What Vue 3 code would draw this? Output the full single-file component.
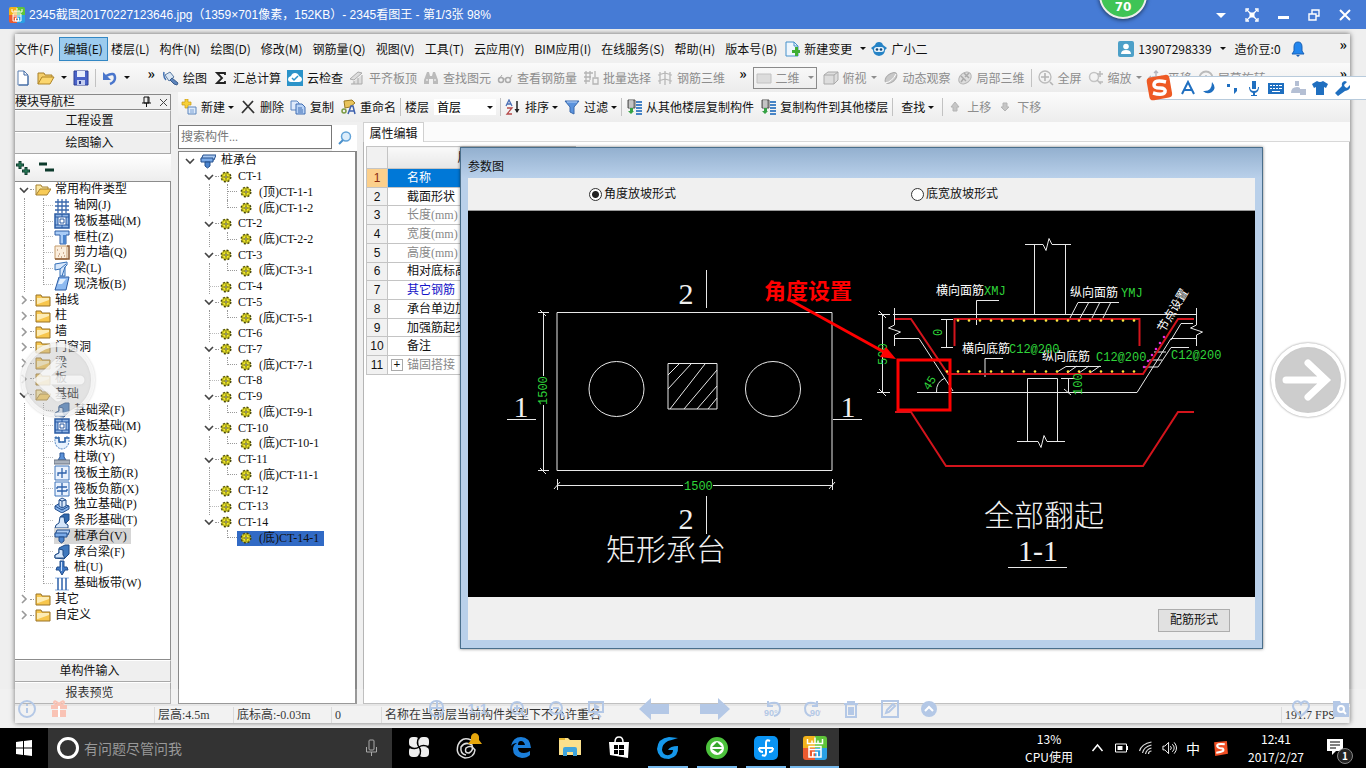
<template>
  <div class="page">
    <svg class="sprite" aria-hidden="true">
      <symbol id="i-app" viewBox="0 0 16 16"><path d="M0 2q0-2 2-2h6v8H0z" fill="#f2b21c" /><path d="M8 0h6q2 0 2 2v6H8z" fill="#5fc43a" /><path d="M0 8h8v8H2q-2 0-2-2z" fill="#ea5a30" /><path d="M8 8h8v6q0 2-2 2H8z" fill="#2aa0e4" /><path d="M3 2v3h10V2M6 3v2M8 1v4M10 3v2M4 7h8v7H4zM4 9h8M6.500 11h3v3h-3z" fill="none" stroke="#fff" stroke-width="1" /></symbol>
      <symbol id="i-new" viewBox="0 0 16 16"><path d="M3 1h6l4 4v10H3z" fill="#fff" stroke="#5a7eb0" /><path d="M9 1v4h4M13 6v9H4" fill="none" stroke="#3d66a3" /></symbol>
      <symbol id="i-open" viewBox="0 0 18 16"><path d="M1 14V3h6l1 2h7v3" fill="#f5cf6c" stroke="#a8802b" /><path d="M1 14l4-7h12l-4 7z" fill="#fbd66e" stroke="#b08526" /></symbol>
      <symbol id="i-save" viewBox="0 0 16 16"><path d="M1 1h14v14H1z" fill="#4a63c8" stroke="#2d3f94" /><path d="M4 1h8v6H4z" fill="#e8eefc" /><path d="M4 10h8v5H4z" fill="#c3cdf0" /><path d="M6 11h2v3H6z" fill="#2d3f94" /></symbol>
      <symbol id="i-undo" viewBox="0 0 16 16"><path d="M4 6q9-5 9 2 0 4-5 6" fill="none" stroke="#4a76cc" stroke-width="2.500" /><path d="M1 2v8h8z" fill="#4a76cc" /></symbol>
      <symbol id="i-paint" viewBox="0 0 16 16"><path d="M2 5l5-3 4 5-5 4z" fill="#d9e6f4" stroke="#5b7ba2" /><path d="M9 8l6 5-1 2-3-1-4-4z" fill="#5c84bc" stroke="#3c5d8c" /><path d="M1 2q-1 5 2 8" fill="none" stroke="#4272b4" stroke-width="1.500" /></symbol>
      <symbol id="i-sum" viewBox="0 0 16 16"><path d="M12 5V3H4l5 5-5 5h8v-2" fill="none" stroke="#222" stroke-width="1.800" /></symbol>
      <symbol id="i-cloud" viewBox="0 0 16 16"><path d="M0 0h16v16H0z" fill="#2b93c9" /><path d="M4 12q-3 0-3-3 0-2 3-3 1-3 4-3t4 3q3 1 3 3 0 3-3 3z" fill="#fff" /><path d="M5 8l2 2 4-4" fill="none" stroke="#2b93c9" stroke-width="1.500" /></symbol>
      <symbol id="i-align" viewBox="0 0 16 16"><path d="M1 9l8-7 4 1-8 7zM2 14h11V5M5 14v-3M9 14V8" fill="#ddd" stroke="#aaa" /></symbol>
      <symbol id="i-find" viewBox="0 0 16 16"><path d="M4 2h2l1 4h2l1-4h2l3 8v4h-5v-5H6v5H1v-4z" fill="#bbb" /><path d="M3 10h2M11 10h2" stroke="#fff" /></symbol>
      <symbol id="i-glass" viewBox="0 0 16 16"><circle cx="4" cy="10" r="2.500" fill="none" stroke="#aaa" stroke-width="1.500" /><circle cx="11" cy="10" r="2.500" fill="none" stroke="#aaa" stroke-width="1.500" /><path d="M6 9h3M2 9l3-4M13 9l2-4" stroke="#aaa" fill="none" /></symbol>
      <symbol id="i-batch" viewBox="0 0 16 16"><path d="M1 3h9M1 7h7M1 11h6M3 1v13M7 1v9M10 8h5v6h-5zM12 1v6" fill="none" stroke="#b4b4b4" stroke-width="1.300" /></symbol>
      <symbol id="i-steel" viewBox="0 0 16 16"><path d="M3 2v12M8 1v14M13 2v12M1 5l7-2 7 2M1 11l7-2 7 2" fill="none" stroke="#b4b4b4" stroke-width="1.200" /></symbol>
      <symbol id="i-flat" viewBox="0 0 16 16"><path d="M1 4h14v9H1z" fill="#dcdcdc" stroke="#c2c2c2" /></symbol>
      <symbol id="i-cube" viewBox="0 0 16 16"><path d="M1 5l4-3h10v8l-4 4H1z" fill="#ddd" stroke="#aaa" /><path d="M1 5h10v9M11 5l4-3" fill="none" stroke="#aaa" /></symbol>
      <symbol id="i-orbit" viewBox="0 0 16 16"><ellipse cx="8" cy="8" rx="7" ry="4" transform="rotate(-40 8 8)" fill="#c8c8c8" stroke="#aaa" /><path d="M2 13Q9 12 13 4" stroke="#fff" fill="none" /></symbol>
      <symbol id="i-part" viewBox="0 0 16 16"><ellipse cx="8" cy="8" rx="7" ry="5" transform="rotate(-40 8 8)" fill="#ddd" stroke="#b4b4b4" /><path d="M4 6l5 5M7 3l5 5M4 12l3-4M8 7l4-4" fill="none" stroke="#aaa" stroke-width="1.500" /></symbol>
      <symbol id="i-full" viewBox="0 0 16 16"><circle cx="7" cy="7" r="6" fill="none" stroke="#bbb" stroke-width="1.300" /><path d="M7 3v8M3 7h8M12 12l3 3" stroke="#b4b4b4" stroke-width="1.600" /></symbol>
      <symbol id="i-zoom" viewBox="0 0 16 16"><circle cx="6" cy="7" r="4.500" fill="none" stroke="#c4c4c4" stroke-width="1.500" /><path d="M9 10l4 4M12 1v6M9 4h6M11 12h4" stroke="#bbb" stroke-width="1.500" /></symbol>
      <symbol id="i-pan" viewBox="0 0 16 16"><path d="M8 1v14M1 8h14M6 3l2-2 2 2M6 13l2 2 2-2M3 6L1 8l2 2M13 6l2 2-2 2" fill="none" stroke="#b4b4bc" stroke-width="1.400" /></symbol>
      <symbol id="i-rot" viewBox="0 0 16 16"><circle cx="8" cy="8" r="6.500" fill="none" stroke="#bbb" stroke-width="2" /><path d="M5 8h6M8 5v6" stroke="#bbb" stroke-width="1.500" /></symbol>
      <symbol id="i-add" viewBox="0 0 16 16"><path d="M4 0h3v3h3v3H7v3H4V6H1V3h3z" fill="#f7d038" stroke="#c49a15" stroke-width=".7" /><path d="M7 8h8v7H7z" fill="#dce9fa" stroke="#5d86bd" /><path d="M9 11h4M9 13h4" stroke="#7fa3d4" /></symbol>
      <symbol id="i-del" viewBox="0 0 16 16"><path d="M3 2l11 12M13 2L2 14" stroke="#333" stroke-width="1.800" /></symbol>
      <symbol id="i-copy" viewBox="0 0 16 16"><path d="M1 2h6l2 2v7H1z" fill="#dfeafb" stroke="#5b84c1" /><path d="M6 5h6l3 3v7H6z" fill="#b8d2f5" stroke="#3f6cb2" /><path d="M8 9h4M8 11h5M8 13h5" stroke="#3f6cb2" /></symbol>
      <symbol id="i-rename" viewBox="0 0 16 16"><path d="M4 2l8-1 3 3-5 4-5 1z" fill="#e8c35a" stroke="#9b7b25" /><path d="M8 15l3-8h2l2 8M9 12h5" fill="none" stroke="#3f62ae" stroke-width="1.500" /><circle cx="4" cy="12" r="2" fill="none" stroke="#7a9a42" stroke-width="1.500" /></symbol>
      <symbol id="i-sort" viewBox="0 0 16 16"><path d="M1 7l3-6 3 6M2 5h4" fill="none" stroke="#4a6fb5" stroke-width="1.300" /><path d="M2 9h5l-5 6h5" fill="none" stroke="#b54a4a" stroke-width="1.300" /><path d="M12 2v11" stroke="#222" stroke-width="1.500" /><path d="M9.500 10h5L12 14z" fill="#222" /></symbol>
      <symbol id="i-filter" viewBox="0 0 16 16"><path d="M1 2h14L10 8v7l-4-2V8z" fill="#5b93dd" stroke="#3a69ac" /><path d="M3 3h10" stroke="#b7d3f7" /></symbol>
      <symbol id="i-floor" viewBox="0 0 16 16"><path d="M2 1h7v8H2z" fill="#9a9a9a" stroke="#555" /><path d="M4 1v8M6 1v8" stroke="#eee" /><path d="M10 3h6M10 6h6M10 9h6M10 12h6M10 15h6" stroke="#4784c6" stroke-width="2" /><path d="M4 9v3H2l3 3 3-3H7V9z" fill="#35a244" /></symbol>
      <symbol id="i-up" viewBox="0 0 16 16"><path d="M8 3l4 5H10v4H6V8H4z" fill="#c6c6c6" stroke="#b4b4b4" /></symbol>
      <symbol id="i-down" viewBox="0 0 16 16"><path d="M8 12l4-4H10V4H6v4H4z" fill="#c6c6c6" stroke="#b4b4b4" /></symbol>
      <symbol id="i-newchg" viewBox="0 0 16 16"><path d="M2 1h8l4 4v10H2z" fill="#eef6fd" stroke="#4691cb" /><path d="M10 1v4h4" fill="none" stroke="#4691cb" /><path d="M8 9h3V6h3v3h2v3h-2v3h-3v-3H8z" fill="#3fae33" /></symbol>
      <symbol id="i-bot" viewBox="0 0 16 16"><path d="M5 2q3-2 6 0l1 2 4 3-2 2q0 5-6 6-6-1-6-6L0 7l4-3z" fill="#2583c6" /><rect x="3" y="6" width="10" height="5" rx="2.500" fill="#e4f2fc" /><circle cx="6" cy="8.500" r="1.300" fill="#164a7a" /><circle cx="10" cy="8.500" r="1.300" fill="#164a7a" /></symbol>
      <symbol id="i-user" viewBox="0 0 16 16"><rect width="16" height="16" rx="2" fill="#4da0c8" /><circle cx="8" cy="5.500" r="2.800" fill="#fff" /><path d="M3 13q0-4 5-4t5 4z" fill="#fff" /></symbol>
      <symbol id="i-bell" viewBox="0 0 16 16"><path d="M8 1q4 0 4 5v4l2 3H2l2-3V6q0-5 4-5z" fill="#2286ee" stroke="#1a61b4" /><path d="M6 14h4l-2 2z" fill="#1a61b4" /></symbol>
      <!-- tree icons -->
      <symbol id="t-fopen" viewBox="0 0 16 16"><path d="M1 13V3h5l1 2h6v3" fill="#fbe7a2" stroke="#a68131" /><path d="M1 13l4-6h11l-4 6z" fill="#f8cb57" stroke="#a68131" /></symbol>
      <symbol id="t-folder" viewBox="0 0 16 16"><path d="M1 3h5l1 2h8v9H1z" fill="#f7c64d" stroke="#997326" /><path d="M2 6h12v2L3 12H2z" fill="#fdecb4" /></symbol>
      <symbol id="t-grid" viewBox="0 0 16 16"><path d="M4 1v14M8 1v14M12 1v14M1 4h14M1 8h14M1 12h14" stroke="#3b68ac" stroke-width="1.300" /></symbol>
      <symbol id="t-raft" viewBox="0 0 16 16"><path d="M1 1h14v14H1z" fill="#8fb4e4" stroke="#2b5ba3" stroke-width="1.500" /><path d="M4 4h8v8H4z" fill="#fff" stroke="#2b5ba3" /><path d="M6 6h4v4H6zM1 4h3M1 12h3M12 4h3M12 12h3M8 1v3M8 12v3" fill="none" stroke="#2b5ba3" /></symbol>
      <symbol id="t-col" viewBox="0 0 16 16"><path d="M1 2h14v4h-3v9H6V6H1z" fill="#a9ccf6" stroke="#2e5fa6" /><path d="M9 6v9h3V6z" fill="#4b84cd" /></symbol>
      <symbol id="t-wall" viewBox="0 0 16 16"><path d="M1 1h12v13H1z" fill="#fbeedd" stroke="#c59b6a" /><path d="M13 1h2v13H1" fill="none" stroke="#8a5a33" stroke-width="1.500" /><path d="M3 5h1M7 3h1M5 9h1M9 8h1M4 11h1M10 11h1M7 12h1" stroke="#a5704a" /></symbol>
      <symbol id="t-beam" viewBox="0 0 16 16"><path d="M1 3l12-2v3l-2 2v9H6V8l-5 1z" fill="#d7e7fb" stroke="#3570b8" /><path d="M6 8l6-5M8 15l3-9" stroke="#3570b8" /></symbol>
      <symbol id="t-slab" viewBox="0 0 16 16"><path d="M5 1h10l-3 13H1z" fill="#8ebaf0" stroke="#2b5ba3" /><path d="M6 3h6l-4 5H4z" fill="#e4f0fd" /></symbol>
      <symbol id="t-fbeam" viewBox="0 0 16 16"><path d="M1 14v-3l4-2V4l6-3h4v9l-5 5z" fill="#3e78bd" stroke="#1e4a85" /><path d="M1 14v-3l4-2V5l4 1v5l2 3z" fill="#d3e5fa" stroke="#1e4a85" /></symbol>
      <symbol id="t-pit" viewBox="0 0 16 16"><path d="M1 3h4v5h6V3h4q1 11-7 12Q0 14 1 3z" fill="#e8f2fd" stroke="#4a80c2" stroke-dasharray="2 1" /><path d="M1 4h4v4h6V4h4" fill="none" stroke="#2f64a8" stroke-width="1.500" /></symbol>
      <symbol id="t-pier" viewBox="0 0 16 16"><path d="M6 3h4v4l2 3H4l2-3z" fill="#5c92d8" stroke="#2a5797" /><path d="M0 10h16v4H0z" fill="#aab2bd" stroke="#6a7584" /></symbol>
      <symbol id="t-main" viewBox="0 0 16 16"><path d="M1 1h14v14H1z" fill="#eaf2fd" stroke="#3f74ba" /><path d="M8 3v10M4 11V8h8V5" fill="none" stroke="#2e62ab" stroke-width="1.300" /></symbol>
      <symbol id="t-neg" viewBox="0 0 16 16"><path d="M1 1h14v14H1z" fill="#eaf2fd" stroke="#3f74ba" /><path d="M8 2v12M3 6h10M3 10h10M3 6v2M13 10V8" fill="none" stroke="#2e62ab" stroke-width="1.300" /></symbol>
      <symbol id="t-iso" viewBox="0 0 16 16"><path d="M1 9l5-3 9 3v3l-7 4-7-4z" fill="#86b2ea" stroke="#234e8c" /><path d="M5 3l3-2 4 2v6l-4 2-3-2z" fill="#dbe9fb" stroke="#234e8c" /><path d="M8 4v7M1 9l7 4 7-4M5 3l3 1 4-1" fill="none" stroke="#234e8c" /></symbol>
      <symbol id="t-strip" viewBox="0 0 16 16"><path d="M6 4l4-3h5v6l-3 3z" fill="#2f67ac" stroke="#1e4a85" /><path d="M1 15l1-3 3-2 1-6h4l1 6 3 2v3z" fill="#d3e5fa" stroke="#1e4a85" /></symbol>
      <symbol id="t-cap" viewBox="0 0 16 16"><path d="M3 2h13l-2 5H1z" fill="#a9c9f2" stroke="#234e8c" /><path d="M1 5h12v4H1z" fill="#7aaae8" stroke="#234e8c" /><path d="M5 9h5v4l-2.500 2L5 13z" fill="#4b84cd" stroke="#234e8c" /></symbol>
      <symbol id="t-pile" viewBox="0 0 16 16"><path d="M6 1h4v6h3l1 3h-3l-3 5-3-5H2l1-3h3z" fill="#3f78c4" stroke="#234e8c" /><path d="M7 2h1v9H7z" fill="#cfe2fa" /></symbol>
      <symbol id="t-band" viewBox="0 0 16 16"><path d="M1 2h14M1 14h14" stroke="#8aaede" /><path d="M4 2v12M8 2v12M12 2v12" stroke="#2e62ab" stroke-width="1.500" /></symbol>
      <symbol id="t-gear" viewBox="0 0 12 12"><circle cx="6" cy="6" r="4.800" fill="#f0e926" stroke="#45440c" stroke-width="1.400" stroke-dasharray="2 1.770" /><circle cx="6" cy="6" r="3.800" fill="#f3ec2c" stroke="#6d6a14" stroke-width=".6" /><path d="M6 3v6M3 6h6" stroke="#5b5a10" stroke-width=".8" /><circle cx="6" cy="6" r="1" fill="#fff" stroke="#45440c" stroke-width=".6" /></symbol>
    </svg>

    <header class="titlebar">
      <svg class="ic16"><use href="#i-app" /></svg>
      <h1>2345截图20170227123646.jpg（1359×701像素，152KB）- 2345看图王 - 第1/3张 98%</h1>
      <div class="winbtns">
        <button aria-label="菜单"><svg viewBox="0 0 14 14"><path d="M2 5h10L7 10z" fill="#fff" /></svg></button>
        <button aria-label="全屏"><svg viewBox="0 0 14 14"><path d="M1 4V1h3M10 1h3v3M13 10v3h-3M4 13H1v-3M2 2l10 10M12 2L2 12" fill="none" stroke="#fff" stroke-width="1.300" /><path d="M4.500 4.500h5v5h-5z" fill="#fff" /></svg></button>
        <button aria-label="最小化"><svg viewBox="0 0 14 14"><path d="M2 8h11v3H2z" fill="#fff" /></svg></button>
        <button aria-label="还原"><svg viewBox="0 0 14 14"><path d="M2 6h7v6H2zM5 6V2h7v6H9" fill="none" stroke="#fff" stroke-width="1.400" /></svg></button>
        <button aria-label="关闭"><svg viewBox="0 0 14 14"><path d="M2 2l10 10M12 2L2 12" stroke="#fff" stroke-width="2" /></svg></button>
      </div>
      <div class="ball">70</div>
    </header>

    <main class="viewer">
      <section class="shot">
        <nav class="menubar">
          <button v-for="m in menus" :key="m" :class="{ on: m === '编辑(E)' }">{{ m }}</button>
          <button class="tool chg"><svg class="ic16"><use href="#i-newchg" /></svg>新建变更<i class="caret"></i></button>
          <button class="tool bot"><svg class="ic16"><use href="#i-bot" /></svg>广小二</button>
          <div class="account">
            <button class="tool"><svg class="ic16"><use href="#i-user" /></svg>13907298339<i class="caret"></i></button>
            <span>造价豆:0</span>
            <svg class="ic16"><use href="#i-bell" /></svg>
            <b class="more">»</b>
          </div>
        </nav>

        <div class="toolbar">
          <div class="quick">
            <svg class="ic16"><use href="#i-new" /></svg>
            <svg class="ic16 wide"><use href="#i-open" /></svg>
            <i class="caret"></i>
            <svg class="ic16"><use href="#i-save" /></svg>
            <i class="sep"></i>
            <svg class="ic16"><use href="#i-undo" /></svg>
            <i class="caret"></i>
            <b class="more">»</b>
          </div>
          <button v-for="t in tools" :key="t.text" class="tool" :class="{ dim: t.dim }">
            <svg class="ic16"><use :href="'#' + t.icon" /></svg>{{ t.text }}
          </button>
          <b class="more mid">»</b>
          <button class="tool dim boxed"><svg class="ic16"><use href="#i-flat" /></svg>二维<i class="caret"></i></button>
          <template v-for="t in views" :key="t.text">
            <button class="tool dim">
              <svg class="ic16"><use :href="'#' + t.icon" /></svg>{{ t.text }}<i v-if="t.caret" class="caret"></i>
            </button>
            <i v-if="t.sep" class="sep"></i>
          </template>
          <b class="more end">»</b>
        </div>

        <div class="body">
          <aside class="nav">
            <div class="navhead"><span>模块导航栏</span>
              <svg viewBox="0 0 30 12"><path d="M4 1h5v6H4zM2 7h9M6.500 7v4M8 1v6" fill="none" stroke="#111" /><path d="M20 3l7 7M27 3l-7 7" stroke="#444" /></svg>
            </div>
            <button class="navbtn">工程设置</button>
            <button class="navbtn">绘图输入</button>
            <div class="pm">
              <svg viewBox="0 0 44 16"><path d="M1 5h8M5 1v8M7 11h8M11 7v8M24 4h8M30 10h9" stroke="#0d3a2c" stroke-width="3" /><path d="M2 5h6M5 2v6M8 11h6M11 8v6" stroke="#2f8a63" /></svg>
            </div>
            <div class="navtree">
              <ul>
                <li v-for="(n, i) in navRows" :key="i" :class="{ sub: n.sub, last: n.last }">
                  <template v-if="n.sub"><i class="v1"></i><i class="v2"></i></template>
                  <template v-else>
                    <button class="chev" :aria-label="n.text">
                      <svg viewBox="0 0 10 10"><path :d="n.open ? 'M1 3l4 4 4-4' : 'M3 1l4 4-4 4'" fill="none" :stroke="n.open ? '#444' : '#999'" stroke-width="1.600" /></svg>
                    </button>
                    <i class="dash"></i>
                  </template>
                  <span class="lab" :class="{ picked: n.picked }"><svg class="ic16"><use :href="'#t-' + n.icon" /></svg>{{ n.text }}</span>
                </li>
              </ul>
            </div>
            <button class="navbtn">单构件输入</button>
            <button class="navbtn">报表预览</button>
          </aside>

          <div class="work">
            <div class="toolbar second">
              <button class="tool"><svg class="ic16"><use href="#i-add" /></svg>新建<i class="caret"></i></button>
              <button class="tool"><svg class="ic16"><use href="#i-del" /></svg>删除</button>
              <button class="tool"><svg class="ic16"><use href="#i-copy" /></svg>复制</button>
              <button class="tool"><svg class="ic16"><use href="#i-rename" /></svg>重命名</button>
              <i class="sep"></i>
              <label class="floor">楼层
                <span class="pick"><select><option>首层</option></select><i class="caret"></i></span>
              </label>
              <i class="sep"></i>
              <button class="tool"><svg class="ic16"><use href="#i-sort" /></svg>排序<i class="caret"></i></button>
              <button class="tool"><svg class="ic16"><use href="#i-filter" /></svg>过滤<i class="caret"></i></button>
              <i class="sep"></i>
              <button class="tool"><svg class="ic16"><use href="#i-floor" /></svg>从其他楼层复制构件</button>
              <button class="tool"><svg class="ic16"><use href="#i-floor" /></svg>复制构件到其他楼层</button>
              <i class="sep"></i>
              <button class="tool seek">查找<i class="caret"></i></button>
              <i class="sep"></i>
              <button class="tool dim"><svg class="ic16"><use href="#i-up" /></svg>上移</button>
              <button class="tool dim"><svg class="ic16"><use href="#i-down" /></svg>下移</button>
            </div>

            <div class="panes">
              <section class="parts">
                <div class="search">
                  <input v-model="keyword" type="text" placeholder="搜索构件..." aria-label="搜索构件" />
                  <button aria-label="搜索"><svg viewBox="0 0 16 16"><circle cx="9" cy="6.500" r="4.500" fill="#dcedfb" stroke="#62a3d8" stroke-width="1.500" /><path d="M6 10l-4 4" stroke="#4a90cb" stroke-width="2" /></svg></button>
                </div>
                <div class="parttree">
                  <ul>
                    <li class="root">
                      <button class="chev" aria-label="桩承台"><svg viewBox="0 0 10 10"><path d="M1 3l4 4 4-4" fill="none" stroke="#444" stroke-width="1.600" /></svg></button>
                      <svg class="ic16"><use href="#t-cap" /></svg>桩承台
                    </li>
                    <li v-for="(p, i) in partRows" :key="i" :class="p.sub ? 'leaf' : 'group'">
                      <template v-if="p.sub">
                        <i class="v1" :class="{ none: p.tail }"></i><i class="v2"></i><i v-if="!p.end" class="v3"></i>
                      </template>
                      <button v-else-if="p.open" class="chev" :aria-label="p.text"><svg viewBox="0 0 10 10"><path d="M1 3l4 4 4-4" fill="none" stroke="#444" stroke-width="1.600" /></svg></button>
                      <i v-else class="tee"></i>
                      <i v-if="p.open" class="dash"></i>
                      <span class="lab" :class="{ picked: p.tail }"><svg class="ic12"><use href="#t-gear" /></svg>{{ p.text }}</span>
                    </li>
                  </ul>
                </div>
              </section>

              <section class="props">
                <div class="tabs"><button class="tab">属性编辑</button></div>
                <div class="sheet">
                  <table>
                    <thead><tr><th class="num"></th><th>属性名称</th></tr></thead>
                    <tbody>
                      <tr v-for="(r, i) in propRows" :key="r.text" :class="r.kind">
                        <td class="num">{{ i + 1 }}</td>
                        <td><b v-if="r.plus" class="plus">+</b>{{ r.text }}</td>
                      </tr>
                    </tbody>
                  </table>
                </div>
              </section>
            </div>
          </div>
        </div>

        <footer class="status">
          <span class="s0"></span><span class="s1">层高:4.5m</span><span class="s2">底标高:-0.03m</span><span class="s3">0</span>
          <span class="s4">名称在当前层当前构件类型下不允许重名</span><span class="s5">191.7 FPS</span>
        </footer>

        <div class="dialog" role="dialog" aria-label="参数图">
          <h2>参数图</h2>
          <div class="modes">
            <label><input v-model="mode" type="radio" value="angle" />角度放坡形式</label>
            <label><input v-model="mode" type="radio" value="width" />底宽放坡形式</label>
          </div>
          <svg class="cad" viewBox="468 211 787 386">
            <g class="w">
              <path d="M557 312.500H832V470.500H557zM668 363.500H717V409H668z" />
              <circle cx="616.500" cy="389" r="27.500" /><circle cx="773" cy="389" r="27.500" />
              <path d="M668 375l11-11M668 389l23-25M670 409l35-45M684 409l33-39M697 409l20-23M708 409l9-11" />
              <path d="M706.500 270V308M706.500 496V534M507 419.500H536M833 419.500H862" />
              <path d="M543.500 313V376M543.500 405V471M538 312.500h11M538 470.500h11M540 310l6 6M540 468l6 6" />
              <path d="M557 485.500H683M713 485.500H833M557.500 479v11M832.500 479v11M554 489l6-7M829 489l6-7M1008 567.500H1067" />
              <!-- section 1-1 -->
              <path d="M1025 244.500h18l3 6 3-12 3 6h19M1034.500 245V314M1065.500 245V314M878 314.500H890M893 314.500H1197" />
              <path d="M894.500 308V325l-6 3 12 4-6 3V346M1196.500 308V325l-6 3 12 4-6 3V346" />
              <path d="M882.500 314V392M877 392.500H890M879 311l7 7M879 389l7 7" />
              <path d="M894 338.500H919L953 391M917 392.500H1137L1171 338.500H1196M1193 323.500H1181L1171 340" />
              <path d="M946.500 319V347M941 319.500h12M941 347.500h12" />
              <path d="M999 300.500H976.500V325M1119 302.500H1078L1069 320M1089 302L1079 320M1100 302L1091 320M1111 302L1102 320" />
              <path d="M1003 358.500H985V377M1101 366.500H1066L1057 372M1077 366l-10 7M1089 366l-10 7M1100 366l-10 7" />
              <path d="M1189 347.500H1171L1158 367H1145M1149 360h13M1154 352h12" />
              <path d="M1027.500 441V378.500H1057.500V441M1017 441.500h21l3 6 3-12 3 6h18M1068.500 378V392M1061 378.500h14M1064 389l7 6" />
              <path d="M936.500 392Q936 382 945 378" />
            </g>
            <g class="r">
              <path d="M895 319H911L948 374H1143L1178 319H1194" />
              <path d="M954.500 346V319H1139.500V346" />
              <path d="M895 412H911L946 466H1143L1178 412H1194" />
            </g>
            <g fill="#ffe640">
              <circle v-for="n in 17" :key="'a' + n" :cx="947 + n * 11" cy="320.500" r="1.300" />
              <circle v-for="n in 18" :key="'b' + n" :cx="936 + n * 11" cy="371.500" r="1.300" />
            </g>
            <g fill="#e02be0">
              <circle v-for="n in 6" :key="'c' + n" :cx="1140 + n * 4" :cy="373 - n * 6" r="1.300" />
            </g>
            <g class="big">
              <text x="666" y="560" class="cn">矩形承台</text>
              <text x="1044" y="526" class="cn">全部翻起</text>
              <text x="1038" y="561">1-1</text>
              <text x="686" y="304">2</text><text x="686" y="529">2</text>
              <text x="521" y="417">1</text><text x="848" y="417">1</text>
            </g>
            <g class="lbl">
              <text x="936" y="295">横向面筋</text><text x="1070" y="297">纵向面筋</text>
              <text x="962" y="353">横向底筋</text><text x="1042" y="361">纵向底筋</text>
              <text transform="translate(1164 333) rotate(-59)">节点设置</text>
            </g>
            <g class="grn">
              <text x="984" y="295">XMJ</text><text x="1121" y="297">YMJ</text>
              <text x="1009" y="353">C12@200</text><text x="1096" y="361">C12@200</text><text x="1171" y="359">C12@200</text>
              <text x="684" y="490">1500</text>
              <text transform="translate(547 405) rotate(-90)">1500</text>
              <text transform="translate(887 365) rotate(-90)">500</text>
              <text transform="translate(942 336) rotate(-90)">0</text>
              <text transform="translate(1082 395) rotate(-90)">100</text>
              <text transform="translate(929 391) rotate(-58)">45</text>
            </g>
            <path d="M790 300L884 352" stroke="#f00" stroke-width="3" />
            <path d="M896 359l-16-2 6-10z" fill="#f00" />
            <path d="M898 360H950V410H898z" fill="none" stroke="#f00" stroke-width="3" />
            <text x="764" y="299" class="note">角度设置</text>
          </svg>
          <div class="dfoot"><button>配筋形式</button></div>
        </div>
      </section>

      <button class="turn prev" aria-label="上一张"><svg viewBox="0 0 76 76"><circle cx="38" cy="38" r="35" /><path d="M60 38H22M38 21L20 38l18 17" /></svg></button>
      <button class="turn next" aria-label="下一张"><svg viewBox="0 0 76 76"><circle cx="38" cy="38" r="35" /><path d="M16 38h38M38 21l18 17-18 17" /></svg></button>

      <div class="ime">
        <svg class="slogo" viewBox="0 0 28 28"><rect x="2" y="2" width="23" height="23" rx="4" transform="rotate(-10 14 14)" fill="#ee5a24" /><path d="M20 8Q8 5 8 11q0 3 6 3t5 4q-2 4-12 1" fill="none" stroke="#fff" stroke-width="3.500" /></svg>
        <svg v-for="(d, i) in imeIcons" :key="i" viewBox="0 0 16 16"><path :d="d.p" :fill="d.fill || 'none'" :stroke="d.stroke || 'none'" stroke-width="2" /></svg>
      </div>

      <div class="viewbar">
        <svg viewBox="0 0 18 18"><circle cx="9" cy="9" r="8" /><path d="M9 8v5M9 4v2" /></svg>
        <svg class="gift" viewBox="0 0 18 18"><path d="M1 5h16v4H1zM2 10h14v7H2z" fill="#f9c3b5" stroke="none" /><path d="M9 5v12" stroke="#fff" /><path d="M9 4Q4-1 4 3q0 1 5 2 5-1 5-2 0-4-5 1" stroke="#f9c3b5" /></svg>
        <div class="vmid">
          <svg viewBox="0 0 18 18"><rect x="2" y="1" width="13" height="15" rx="6" /><path d="M2 8h13M9 1v7" /></svg>
          <span>1:1</span>
          <svg viewBox="0 0 18 18"><circle cx="8" cy="8" r="6" /><path d="M5 8h6M8 5v6M12 12l5 5" /></svg>
          <svg viewBox="0 0 18 18"><circle cx="8" cy="8" r="6" /><path d="M5 8h6M12 12l5 5" /></svg>
          <svg viewBox="0 0 18 18"><path d="M1 2h16M2 2v10h14V2M9 12v2M4 17l5-4 5 4M8 5l3 2-3 2z" /></svg>
          <svg class="arrow back" viewBox="0 0 32 24"><path d="M1 12L13 1v6h18v10H13v6z" class="f" /></svg>
          <svg class="arrow" viewBox="0 0 32 24"><path d="M31 12L19 1v6H1v10h18v6z" class="f" /></svg>
          <svg viewBox="0 0 18 18"><path d="M4 4q11-4 12 4 0 7-6 8M4 1v5h5" /><text x="0" y="16">90°</text></svg>
          <svg viewBox="0 0 18 18"><path d="M14 4Q3 0 2 8q0 7 6 8M14 1v5H9" /><text x="7" y="16">90°</text></svg>
          <svg viewBox="0 0 18 18"><path d="M2 4h14M6 4V2h6v2M4 5v12h10V5M7 7v8M9 7v8M11 7v8" /></svg>
          <svg viewBox="0 0 18 18"><path d="M1 1h16v16H1zM5 13l1-3 6-6 2 2-6 6z" /></svg>
          <svg viewBox="0 0 18 18"><circle cx="9" cy="9" r="8" class="f" /><path d="M5 11l4-4 4 4" stroke="#fff" /></svg>
        </div>
        <svg viewBox="0 0 18 18"><path d="M9 16Q-3 7 3 2q4-2 6 2 2-4 6-2 6 5-6 14z" /></svg>
        <svg class="box" viewBox="0 0 18 18"><path d="M1 1h7l1 2h8v14H1z" class="f" /><circle cx="9" cy="9" r="3" stroke="#fff" /><path d="M11 11l3 3" stroke="#fff" /></svg>
      </div>
    </main>

    <footer class="taskbar">
      <button class="start" aria-label="开始"><svg viewBox="0 0 16 16"><path d="M0 2l7-1v6.500H0zM8 1l8-1v7.500H8zM0 8.500h7V15l-7-1zM8 8.500h8V16l-8-1z" fill="#fff" /></svg></button>
      <label class="ask"><i class="ring"></i><input type="text" placeholder="有问题尽管问我" />
        <svg viewBox="0 0 14 18"><rect x="4" y="1" width="5" height="10" rx="1" fill="none" stroke="#aaa" /><path d="M1.500 8v5h10V8M6.500 13v4" fill="none" stroke="#aaa" /></svg>
      </label>
      <button class="app" aria-label="风车"><svg viewBox="0 0 24 24"><g fill="#eee"><rect x="2" y="2" width="10" height="10" rx="4" /><rect x="12" y="2" width="10" height="10" rx="4" /><rect x="2" y="12" width="10" height="10" rx="4" /><rect x="12" y="12" width="10" height="10" rx="4" /><path d="M8 8h8v8H8z" /></g><path d="M12 12Q9 8 12 2M12 12q4-3 10 0M12 12q3 4 0 10M12 12q-4 3-10 0" fill="none" stroke="#000" stroke-width="1.500" /></svg></button>
      <button class="app bellapp" aria-label="提醒"><svg viewBox="0 0 28 28"><path d="M17 7Q8 3 4 12q-3 10 7 13 9 0 10-8-4-6-9-2-2 5 3 5 5-3 3-8-7-4-11 2-1 7 5 8" fill="none" stroke="#ddd" stroke-width="1.500" /><path d="M21 0q5 1 4 7l3 4H14l3-4q-1-6 4-7z" fill="#e7a70c" /></svg></button>
      <button class="app" aria-label="Edge"><svg viewBox="0 0 24 24"><path d="M2 11Q4 2 12 2q9 0 10 11H9q0 5 6 5 3 0 6-2v4q-3 3-8 3-9-1-9-9 0-4 4-6-4 0-6 3zM9 10h7q-1-4-4-4t-3 4z" fill="#1b7fdb" /></svg></button>
      <button class="app" aria-label="文件"><svg viewBox="0 0 24 24"><path d="M1 3h9l2 2h11v15H1z" fill="#fbe08c" /><path d="M1 3h6v2H1z" fill="#e8b931" /><path d="M5 14q0-2 2-2h10q2 0 2 2v7h-4v-4H9v4H5z" fill="#3fa4dd" /></svg></button>
      <button class="app" aria-label="商店"><svg viewBox="0 0 24 24"><path d="M2 7h20l-1 16-18-3z" fill="#fff" /><path d="M8 7q0-5 4-5t4 5" fill="none" stroke="#fff" stroke-width="1.500" /><path d="M7 10h4v4H7zM12 10h5v4h-5zM7 15h4v4H7zM12 15h5v5h-5z" fill="#000" /></svg></button>
      <button class="app run" aria-label="广联达"><svg viewBox="0 0 24 24"><path d="M22 2q-6 2-10 3-6 3-6 9 1 6 7 5 4-1 4-5h-5q2-4 10-4 1 11-9 13Q2 23 1 13 2 2 13 1z" fill="#1597ea" /></svg></button>
      <button class="app run" aria-label="浏览器"><svg viewBox="0 0 24 24"><circle cx="12" cy="12" r="9" fill="#fff" stroke="#4cc13c" stroke-width="4" /><path d="M7 11l5-5 5 5zM7 13h10l-4 4z" fill="#35a52b" /></svg></button>
      <button class="app run" aria-label="云"><svg viewBox="0 0 24 24"><rect width="24" height="24" rx="5" fill="#0a94f4" /><path d="M16 5q-4-2-4 2v10q0 4-4 2M5 12h14M5 12q0 4 4 4M19 12q0 4-4 4" fill="none" stroke="#fff" stroke-width="2" /></svg></button>
      <button class="app run cur" aria-label="看图王"><svg viewBox="0 0 16 16"><use href="#i-app" /></svg></button>
      <div class="tray">
        <div class="two cpu"><span>13%</span><span>CPU使用</span></div>
        <svg viewBox="0 0 14 14"><path d="M2 10l5-6 5 6" fill="none" stroke="#fff" stroke-width="1.500" /></svg>
        <svg viewBox="0 0 14 14"><path d="M1 3h11v8H1zM13 5v4" fill="none" stroke="#fff" /><path d="M3 5h5v4H3z" fill="#fff" /></svg>
        <svg viewBox="0 0 14 14"><path d="M1 10Q3 3 13 1M4 12q1-6 9-8M7 13q1-5 6-6M10 13q0-3 3-3" fill="none" stroke="#ddd" stroke-width="1.200" /></svg>
        <svg viewBox="0 0 16 14"><path d="M1 5h2l4-4v12L3 9H1zM9 5q2 2 0 4M11 3q4 4 0 8M13 1q5 6 0 12" fill="none" stroke="#fff" /></svg>
        <span class="zh">中</span>
        <svg class="sg" viewBox="0 0 16 16"><path d="M2 2l12-1 1 12-12 2z" fill="#f04e23" /><path d="M12 4Q4 3 5 6q1 2 5 2 3 3-6 4" fill="none" stroke="#fff" stroke-width="2" /></svg>
        <div class="two clock"><span>12:41</span><span>2017/2/27</span></div>
        <div class="note-c"><svg viewBox="0 0 18 18"><path d="M1 1h16v12h-7l-4 4v-4H1z" fill="#fff" /><path d="M4 4h10M4 7h10M4 10h6" stroke="#000" /></svg><b>1</b></div>
      </div>
    </footer>
  </div>
</template>

<script setup>
import { ref } from 'vue'

const keyword = ref('')
const mode = ref('angle')

const menus = ['文件(F)', '编辑(E)', '楼层(L)', '构件(N)', '绘图(D)', '修改(M)', '钢筋量(Q)', '视图(V)', '工具(T)', '云应用(Y)', 'BIM应用(I)', '在线服务(S)', '帮助(H)', '版本号(B)']

const tools = [
  { icon: 'i-paint', text: '绘图' },
  { icon: 'i-sum', text: '汇总计算' },
  { icon: 'i-cloud', text: '云检查' },
  { icon: 'i-align', text: '平齐板顶', dim: true },
  { icon: 'i-find', text: '查找图元', dim: true },
  { icon: 'i-glass', text: '查看钢筋量', dim: true },
  { icon: 'i-batch', text: '批量选择', dim: true },
  { icon: 'i-steel', text: '钢筋三维', dim: true }
]

const views = [
  { icon: 'i-cube', text: '俯视', caret: true },
  { icon: 'i-orbit', text: '动态观察' },
  { icon: 'i-part', text: '局部三维', sep: true },
  { icon: 'i-full', text: '全屏' },
  { icon: 'i-zoom', text: '缩放', caret: true },
  { icon: 'i-pan', text: '平移' },
  { icon: 'i-rot', text: '屏幕旋转' }
]

const navRows = [
  { text: '常用构件类型', icon: 'fopen', open: true },
  { text: '轴网(J)', icon: 'grid', sub: true },
  { text: '筏板基础(M)', icon: 'raft', sub: true },
  { text: '框柱(Z)', icon: 'col', sub: true },
  { text: '剪力墙(Q)', icon: 'wall', sub: true },
  { text: '梁(L)', icon: 'beam', sub: true },
  { text: '现浇板(B)', icon: 'slab', sub: true, last: true },
  { text: '轴线', icon: 'folder' },
  { text: '柱', icon: 'folder' },
  { text: '墙', icon: 'folder' },
  { text: '门窗洞', icon: 'folder' },
  { text: '梁', icon: 'folder' },
  { text: '板', icon: 'folder' },
  { text: '基础', icon: 'fopen', open: true },
  { text: '基础梁(F)', icon: 'fbeam', sub: true },
  { text: '筏板基础(M)', icon: 'raft', sub: true },
  { text: '集水坑(K)', icon: 'pit', sub: true },
  { text: '柱墩(Y)', icon: 'pier', sub: true },
  { text: '筏板主筋(R)', icon: 'main', sub: true },
  { text: '筏板负筋(X)', icon: 'neg', sub: true },
  { text: '独立基础(P)', icon: 'iso', sub: true },
  { text: '条形基础(T)', icon: 'strip', sub: true },
  { text: '桩承台(V)', icon: 'cap', sub: true, picked: true },
  { text: '承台梁(F)', icon: 'fbeam', sub: true },
  { text: '桩(U)', icon: 'pile', sub: true },
  { text: '基础板带(W)', icon: 'band', sub: true, last: true },
  { text: '其它', icon: 'folder' },
  { text: '自定义', icon: 'folder' }
]

// each group and the components below it
const groups = [
  ['CT-1', '(顶)CT-1-1', '(底)CT-1-2'],
  ['CT-2', '(底)CT-2-2'],
  ['CT-3', '(底)CT-3-1'],
  ['CT-4'],
  ['CT-5', '(底)CT-5-1'],
  ['CT-6'],
  ['CT-7', '(底)CT-7-1'],
  ['CT-8'],
  ['CT-9', '(底)CT-9-1'],
  ['CT-10', '(底)CT-10-1'],
  ['CT-11', '(底)CT-11-1'],
  ['CT-12'],
  ['CT-13'],
  ['CT-14', '(底)CT-14-1']
]
const partRows = groups.flatMap(([name, ...subs], g) => [
  { text: name, open: subs.length > 0 },
  ...subs.map((text, i) => ({ text, sub: true, end: i === subs.length - 1, tail: g === groups.length - 1 }))
])

const propRows = [
  { text: '名称', kind: 'cur' },
  { text: '截面形状' },
  { text: '长度(mm)', kind: 'grey' },
  { text: '宽度(mm)', kind: 'grey' },
  { text: '高度(mm)', kind: 'grey' },
  { text: '相对底标高(m)' },
  { text: '其它钢筋', kind: 'blue' },
  { text: '承台单边加强筋' },
  { text: '加强筋起步(mm)' },
  { text: '备注' },
  { text: '锚固搭接', kind: 'grey', plus: true }
]

const blue = '#1f6fc0'
const imeIcons = [
  { p: 'M2 14L8 2l6 12M4 10h8', stroke: blue },
  { p: 'M10 2q5 6 0 10-5 3-9-1 9 1 9-9z', fill: blue },
  { p: 'M3 4h3v3H3zM10 8h3v3l-3 3z', fill: blue },
  { p: 'M6 1h4v8H6zM3 7h1q0 4 4 4t4-4h1q0 5-4 6v2h2v1H5v-1h2v-2Q3 12 3 7z', fill: blue },
  { p: 'M0 3h16v11H0zM2 5v1h2V5zM5 5v1h2V5zM8 5v1h2V5zM11 5v1h3V5zM2 8v1h2V8zM5 8v1h2V8zM8 8v1h2V8zM11 8v1h3V8zM4 11v1h8v-1z', fill: blue },
  { p: 'M5 1h4v5H5zM1 13q0-6 6-6 2 0 3 1v5zM10 9h6v6h-6z', fill: '#b4bfd4' },
  { p: 'M5 1q3 2 6 0l5 3-2 4-2-1v8H4V7L2 8 0 4z', fill: blue },
  { p: 'M1 13l7-7q-1-4 3-5l2 1-3 3 1 2 2 1 3-3q1 5-5 6l-7 5z', fill: blue }
]
</script>

<style>
body {
  background: #000;
  overflow: hidden;
}
</style>

<style scoped>
* {
  box-sizing: border-box;
}

.page {
  height: 100vh;
  display: flex;
  flex-direction: column;
  font-family: "Liberation Serif", "Noto Sans CJK SC", serif;
  font-size: 12px;
  line-height: 16px;
  color: #111;
  overflow: hidden;
}

.sprite {
  position: absolute;
  width: 0;
  height: 0;
}

button {
  font: inherit;
  color: inherit;
  background: none;
  border: 0;
  padding: 0;
  white-space: nowrap;
  flex: none;
}

ul {
  list-style: none;
  margin: 0;
  padding: 0;
}

svg {
  flex: none;
}

.ic16 {
  width: 16px;
  height: 16px;
}

.ic12 {
  width: 12px;
  height: 12px;
}

/* title bar */
.titlebar {
  position: relative;
  flex: none;
  height: 29px;
  display: flex;
  align-items: center;
  gap: 4px;
  padding: 0 14px 0 9px;
  background: #467bd5;
  color: #fff;
  z-index: 2;
}

.titlebar h1 {
  font-family: "Liberation Sans", "Noto Sans CJK SC", sans-serif;
  font-size: 12px;
  font-weight: normal;
  margin: 0;
  flex: 1;
}

.winbtns {
  display: flex;
  gap: 17px;
}

.winbtns button,
.winbtns svg {
  width: 14px;
  height: 14px;
  display: block;
}

.ball {
  position: absolute;
  right: 219px;
  top: -29px;
  width: 48px;
  height: 48px;
  border-radius: 50%;
  border: 2px solid #eee;
  background: #3fc456;
  box-shadow: 0 1px 4px rgba(0, 0, 0, 0.6);
  font: bold 12px/14px "DejaVu Sans", sans-serif;
  text-align: center;
  padding-top: 27px;
}

/* picture viewer */
.viewer {
  position: relative;
  flex: 1;
  min-height: 0;
  display: flex;
  padding: 5px 16px 5px 15px;
  background: #efefef;
}

.shot {
  position: relative;
  flex: 1;
  min-width: 0;
  display: flex;
  flex-direction: column;
  background: #f0f0f0;
  box-shadow: 0 0 5px rgba(0, 0, 0, 0.6);
}

.menubar,
.toolbar {
  font-family: "Noto Sans CJK SC", sans-serif;
}

.menubar {
  flex: none;
  height: 29px;
  display: flex;
  align-items: center;
  gap: 10px;
}

.menubar .on {
  background: #9ccbee;
  outline: 1px solid #3287c4;
  padding: 3px 4px;
  margin: 0 -4px;
}

.menubar > .on + button {
  margin-left: -2px;
}

.tool {
  display: flex;
  align-items: center;
  gap: 4px;
}

.dim {
  color: #8d8d8d;
}

.caret {
  border: 3px solid transparent;
  border-top: 3px solid currentColor;
  border-bottom: 0;
  width: 6px;
  flex: none;
}

.menubar .tool .caret {
  margin-left: 4px;
}

.chg {
  margin-left: -3px;
}

.bot {
  margin-left: -5px;
}

.account {
  margin-left: auto;
  align-self: stretch;
  display: flex;
  align-items: center;
  gap: 9px;
  padding-right: 3px;
  white-space: nowrap;
}

.more {
  align-self: flex-start;
  font-size: 14px;
  line-height: 20px;
}

.account .more {
  margin-left: 25px;
}

.toolbar {
  flex: none;
  height: 29px;
  display: flex;
  align-items: center;
  gap: 6px;
  white-space: nowrap;
  background: linear-gradient(#fafafa, #ececec);
}

.quick {
  width: 142px;
  height: 29px;
  display: flex;
  align-items: center;
  gap: 6px;
}

.quick .wide {
  width: 18px;
}

.quick .more {
  margin: 0 2px 0 auto;
}

.sep {
  width: 1px;
  height: 18px;
  background: #c2c2c2;
  flex: none;
}

.mid {
  margin: 0 0 0 8px;
}

.boxed {
  border: 1px solid #8a8a8a;
  height: 22px;
  padding: 0 2px;
}

.boxed .caret {
  margin-left: 4px;
}

.end {
  margin-left: auto;
  padding-right: 3px;
}

.body {
  flex: 1;
  min-height: 0;
  display: flex;
  gap: 7px;
}

/* left navigator */
.nav {
  width: 156px;
  padding-top: 2px;
  display: flex;
  flex-direction: column;
  flex: none;
}

.navhead {
  height: 16px;
  display: flex;
  justify-content: space-between;
  align-items: center;
  border: 1px solid #888;
  border-left: 0;
  overflow: hidden;
}

.navhead svg {
  width: 30px;
  height: 12px;
}

.navbtn {
  height: 22px;
  border: 1px solid #a8a8a8;
  border-left: 0;
  border-top-color: #fff;
  background: #efefef;
  padding-right: 6px;
  line-height: 20px;
}

.pm {
  height: 27px;
  background: linear-gradient(#fff, #ededed);
  display: flex;
  align-items: center;
}

.pm svg {
  width: 44px;
  height: 16px;
}

.navtree {
  flex: 1;
  min-height: 0;
  background: #fff;
  border: 1px solid #8c8c8c;
  border-left: 0;
}

/* rows share the list height evenly */
.navtree ul,
.parttree ul {
  display: flex;
  flex-direction: column;
}

.navtree ul {
  height: 441px;
}

.parttree ul {
  height: 393px;
}

li {
  flex: 1;
  min-height: 0;
  display: flex;
  align-items: center;
  white-space: nowrap;
  line-height: 15px;
}

.chev {
  width: 10px;
  height: 10px;
}

.chev svg {
  display: block;
  width: 10px;
  height: 10px;
}

.navtree li {
  padding-left: 4px;
}

.dash {
  width: 4px;
  border-top: 1px dotted #999;
  margin: 0 1px;
}

.lab {
  display: flex;
  align-items: center;
  gap: 4px;
}

.v1,
.v2,
.v3 {
  align-self: stretch;
  flex: none;
  border-left: 1px dotted #999;
}

.navtree .v1 {
  width: 19px;
  margin-left: 5px;
}

.navtree .v2 {
  width: 11px;
  background: linear-gradient(90deg, #bbb 50%, transparent 50%) 0 7px / 2px 1px repeat-x;
}

.navtree .last .v2 {
  height: 8px;
  align-self: flex-start;
}

.navtree .picked {
  background: #d6d6d6;
  padding-right: 4px;
}

/* right part */
.work {
  flex: 1;
  min-width: 0;
  display: flex;
  flex-direction: column;
}

.second {
  height: 30px;
  padding-left: 3px;
  background: linear-gradient(#fcfcfc, #ededed);
}

.second .caret {
  margin-left: -1px;
}

.second .sep {
  margin: 0 -2px;
}

.floor {
  display: flex;
  align-items: center;
  gap: 5px;
}

.seek {
  padding: 0 4px;
}

.pick {
  display: flex;
  align-items: center;
  background: #fff;
  width: 62px;
  padding: 0 3px;
}

.pick select {
  appearance: none;
  border: 0;
  background: none;
  font: inherit;
  flex: 1;
  min-width: 0;
  padding: 0;
}

.panes {
  flex: 1;
  min-height: 0;
  display: flex;
  gap: 6px;
}

.parts {
  width: 179px;
  flex: none;
  display: flex;
  flex-direction: column;
  padding-top: 3px;
}

.search {
  display: flex;
  height: 26px;
}

.search input {
  flex: 1;
  min-width: 0;
  height: 24px;
  border: 1px solid #777;
  background: #fff;
  padding: 0 2px;
  font: inherit;
}

.search input::placeholder {
  color: #777;
}

.search button {
  width: 25px;
  background: #fff;
}

.search svg {
  display: block;
  width: 16px;
  height: 16px;
  margin: 0 auto;
}

.parttree {
  flex: 1;
  min-height: 0;
  background: #fff;
  border: 1px solid #888;
  border-right: 2px solid #888;
  padding-top: 1px;
}

.root {
  padding-left: 6px;
  gap: 5px;
}

.group {
  padding-left: 25px;
}

.parttree .dash {
  width: 4px;
  margin: 0 1px;
}

.tee {
  align-self: stretch;
  width: 11px;
  margin: 0 0 0 5px;
  border-left: 1px dotted #999;
  background: linear-gradient(90deg, #bbb 50%, transparent 50%) 0 7px / 2px 1px repeat-x;
}

.group .lab {
  gap: 6px;
}

.leaf .v1 {
  width: 18px;
  margin-left: 30px;
}

.leaf .v1.none {
  border-color: transparent;
}

.leaf .v2 {
  width: 10px;
  height: 8px;
  align-self: flex-start;
  border-bottom: 1px dotted #999;
}

.leaf .v3 {
  width: 0;
  margin-left: -10px;
  margin-right: 9px;
}

.leaf .lab {
  gap: 7px;
  padding: 0 5px 0 3px;
}

.leaf .picked {
  background: #316ac5;
}

.props {
  flex: 1;
  min-width: 0;
  display: flex;
  flex-direction: column;
}

.tabs {
  height: 20px;
  background: #fbfbfb;
  border-bottom: 1px solid #d8d8d8;
}

.tab {
  height: 20px;
  width: 61px;
  background: #fff;
  border: 1px solid #d0d0d0;
  border-bottom: 0;
  font-family: "Noto Sans CJK SC", sans-serif;
}

.sheet {
  flex: 1;
  min-height: 0;
  background: #fff;
  border: 1px solid #b5b5b5;
  border-top: 0;
  padding: 4px 2px 0;
}

table {
  border-collapse: collapse;
  height: 229px;
  line-height: 16px;
}

th {
  width: 188px;
  height: 22px;
  padding: 0;
  font-weight: normal;
  background: linear-gradient(#fafafa, #e6e6e6);
  border: 1px solid #c4c4c4;
}

td {
  border: 1px solid #c4c4c4;
  padding: 0 0 0 19px;
  position: relative;
}

.num {
  width: 21px;
  padding: 0;
  text-align: center;
  background: #f1f1f1;
  font-family: "Liberation Sans", sans-serif;
}

.cur td {
  background: #0078d7;
  color: #fff;
}

.cur .num {
  background: #fcd08c;
  color: #8a2a12;
}

.grey td {
  color: #888;
}

.grey .num {
  color: #111;
}

.blue td:last-child {
  color: #1414c8;
}

.plus {
  position: absolute;
  left: 3px;
  top: 3px;
  width: 12px;
  height: 12px;
  line-height: 9px;
  text-align: center;
  border: 1px solid #aaa;
  color: #111;
}

.status {
  flex: none;
  height: 19px;
  display: flex;
  border-top: 2px solid #e2e2e2;
  padding-top: 1px;
  line-height: 16px;
  white-space: nowrap;
}

.status span {
  border-right: 1px solid #d5d5d5;
  padding-left: 3px;
}

.s0 { width: 140px; }
.s1 { width: 79px; }
.s2 { width: 98px; }
.s3 { width: 50px; }
.s4 { flex: 1; }
.s5 { width: 68px; }

/* parameter dialog over the main window */
.dialog {
  position: absolute;
  left: 445px;
  top: 113px;
  width: 803px;
  background: #b9d0ea;
  border: 1px solid #4a6f8c;
  box-shadow: 0 0 3px rgba(0, 0, 0, 0.5);
  padding: 0 7px 8px;
  display: flex;
  flex-direction: column;
}

.dialog h2 {
  margin: 0 -7px;
  height: 30px;
  padding: 11px 7px 0;
  font-size: 12px;
  font-weight: normal;
  line-height: 16px;
  background: linear-gradient(#93b0cf, #b9d0ea);
}

.modes {
  height: 33px;
  display: flex;
  align-items: center;
  background: #f0f0f0;
  padding-left: 121px;
  border-bottom: 1px solid #999;
}

.modes label {
  width: 322px;
  display: flex;
  align-items: center;
  gap: 2px;
}

.modes input {
  appearance: none;
  width: 13px;
  height: 13px;
  margin: 0;
  border: 1px solid #333;
  border-radius: 50%;
  background: #fff;
}

.modes input:checked {
  background: radial-gradient(circle, #222 3px, #fff 4px);
}

.cad {
  display: block;
  width: 100%;
  background: #000;
}

.w {
  fill: none;
  stroke: #e8e8e8;
  stroke-width: 1;
}

.r {
  fill: none;
  stroke: #d3141c;
  stroke-width: 2;
}

.big {
  fill: #f0f0f0;
  font-size: 30px;
  font-weight: 300;
  text-anchor: middle;
}

.lbl {
  fill: #fff;
  font-size: 12px;
}

.grn {
  fill: #2fd43a;
  font-family: "Liberation Mono", monospace;
  font-size: 12px;
}

.note {
  fill: #f00;
  font-size: 22px;
  font-weight: bold;
}

.dfoot {
  height: 43px;
  background: #f0f0f0;
  display: flex;
  justify-content: flex-end;
  align-items: center;
  padding: 3px 25px 0 0;
}

.dfoot button {
  width: 72px;
  height: 23px;
  background: #e1e1e1;
  border: 1px solid #adadad;
}

/* controls lying over the picture */
.turn {
  position: absolute;
  top: 313px;
  width: 76px;
  height: 76px;
}

.turn svg {
  width: 76px;
  height: 76px;
  fill: rgba(215, 215, 215, 0.35);
  stroke: rgba(255, 255, 255, 0.75);
  stroke-width: 4;
  filter: drop-shadow(0 0 1px rgba(0, 0, 0, 0.25));
}

.turn path {
  fill: none;
  stroke-width: 9;
  stroke-linecap: round;
}

.prev {
  left: 20px;
}

.next {
  right: 20px;
}

.next svg {
  fill: rgba(215, 215, 215, 0.8);
  stroke: #fff;
  filter: drop-shadow(0 0 1px rgba(0, 0, 0, 0.45));
}

.next path {
  stroke-width: 7;
}

.ime {
  position: absolute;
  right: 0;
  top: 47px;
  height: 24px;
  display: flex;
  align-items: center;
  gap: 6px;
  padding-right: 16px;
  background: #fff;
  border: 1px solid #b8cbdc;
  border-width: 1px 0;
}

.ime svg {
  width: 16px;
  height: 16px;
}

.ime .slogo {
  width: 28px;
  height: 28px;
  margin-left: -6px;
}

.viewbar {
  position: absolute;
  left: 0;
  right: 0;
  bottom: 0;
  height: 39px;
  display: flex;
  align-items: center;
  gap: 14px;
  padding: 0 16px 0 18px;
  background: rgba(255, 255, 255, 0.15);
}

.viewbar svg {
  width: 18px;
  height: 18px;
  fill: none;
  stroke: #b4c8e6;
  stroke-width: 2;
}

.viewbar .f {
  fill: #b4c8e6;
  stroke: none;
}

.viewbar text {
  fill: #b4c8e6;
  stroke: none;
  font-size: 9px;
}

.vmid {
  flex: 1;
  display: flex;
  justify-content: center;
  align-items: center;
  gap: 21px;
  padding-left: 6px;
  color: #b4c8e6;
  font: bold 14px "Liberation Sans", sans-serif;
}

.viewbar .arrow {
  width: 32px;
  height: 24px;
  margin: 0 12px 0 4px;
}

.viewbar .back {
  margin: 0 4px 0 12px;
}

.viewbar .box {
  margin-left: 8px;
}

/* windows taskbar */
.taskbar {
  flex: none;
  height: 40px;
  display: flex;
  align-items: stretch;
  background: #000;
  color: #fff;
  font-family: "Noto Sans CJK SC", sans-serif;
}

.start {
  width: 48px;
}

.start svg {
  width: 16px;
  height: 16px;
  display: block;
  margin: 0 auto;
}

.ask {
  width: 344px;
  background: #333;
  display: flex;
  align-items: center;
  padding: 0 13px 0 9px;
}

.ring {
  width: 22px;
  height: 22px;
  border: 3px solid #fff;
  border-radius: 50%;
}

.ask input {
  flex: 1;
  min-width: 0;
  background: none;
  border: 0;
  font: inherit;
  font-size: 14px;
  color: #fff;
  padding: 0 5px;
}

.ask input::placeholder {
  color: #999;
}

.ask svg {
  width: 14px;
  height: 18px;
}

.app {
  width: 49px;
  border-bottom: 2px solid transparent;
}

.ask + .app {
  margin-left: 2px;
}

.app svg {
  width: 24px;
  height: 24px;
  display: block;
  margin: 0 auto;
}

.bellapp {
  margin-right: 4px;
}

.bellapp svg {
  width: 28px;
  height: 28px;
}

.run {
  background: linear-gradient(#76b9ed, #76b9ed) center bottom / 40px 2px no-repeat;
}

.cur {
  background: linear-gradient(#76b9ed, #76b9ed) center bottom / 100% 2px no-repeat #333;
}

.run,
.cur {
  border: 0;
}

.tray {
  margin-left: auto;
  display: flex;
  align-items: center;
  gap: 9px;
  padding-right: 16px;
}

.tray > svg {
  width: 15px;
  height: 14px;
}

.tray > .sg {
  width: 17px;
  height: 17px;
}

.two {
  display: flex;
  flex-direction: column;
  align-items: center;
  line-height: 18px;
}

.clock {
  width: 76px;
  margin-right: 3px;
}

.cpu {
  margin-right: 8px;
}

.zh {
  font-size: 14px;
  margin-right: 3px;
}

.note-c {
  position: relative;
  width: 24px;
  height: 20px;
}

.note-c svg {
  width: 18px;
  height: 18px;
}

.note-c b {
  position: absolute;
  right: -3px;
  bottom: -6px;
  width: 16px;
  height: 16px;
  border-radius: 50%;
  border: 1px solid #888;
  background: #222;
  font-size: 10px;
  line-height: 14px;
  text-align: center;
}
</style>
